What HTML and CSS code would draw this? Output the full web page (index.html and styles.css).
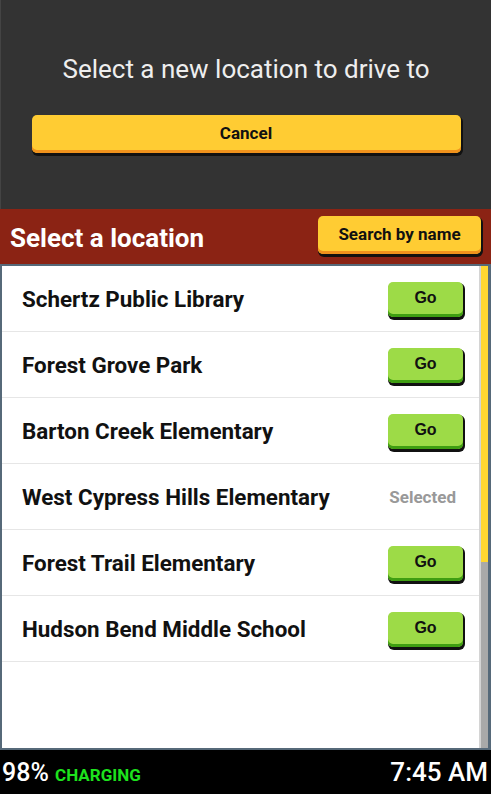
FILE: index.html
```html
<!DOCTYPE html>
<html lang="en">
<head>
  <meta charset="UTF-8" />
  <meta name="viewport" content="width=device-width, initial-scale=1.0" />
  <title>Select location</title>
  <link rel="stylesheet" href="styles.css">
</head>
<body>

  <!-- Prompt -->
  <section class="prompt">
    <h1>Select a new location to drive to</h1>
    <button class="btn btn-yellow cancel-btn">Cancel</button>
  </section>

  <!-- Header -->
  <header class="list-header">
    <h2>Select a location</h2>
    <button class="btn btn-yellow search-btn">Search by name</button>
  </header>

  <!-- Location list -->
  <div class="list-box">
    <ul class="locations">
      <li><span>Schertz Public Library</span><button class="btn btn-green">Go</button></li>
      <li><span>Forest Grove Park</span><button class="btn btn-green">Go</button></li>
      <li><span>Barton Creek Elementary</span><button class="btn btn-green">Go</button></li>
      <li><span>West Cypress Hills Elementary</span><em class="selected">Selected</em></li>
      <li><span>Forest Trail Elementary</span><button class="btn btn-green">Go</button></li>
      <li><span>Hudson Bend Middle School</span><button class="btn btn-green">Go</button></li>
    </ul>
    <div class="scrollbar">
      <div class="thumb"></div>
    </div>
  </div>

  <!-- Status bar -->
  <footer class="status">
    <div class="battery">98% <span class="charging">CHARGING</span></div>
    <div class="clock">7:45 AM</div>
  </footer>

</body>
</html>
```

FILE: styles.css
```css
body {
  margin: 0;
  height: 794px;
  display: flex;
  flex-direction: column;
  font-family: Roboto, "Liberation Sans", Arial, sans-serif;
  background: #000;
  overflow: hidden;
}

/* Buttons */
.btn {
  font-family: Roboto, "Liberation Sans", Arial, sans-serif;
  font-weight: bold;
  color: #111;
  border: none;
  border-radius: 5px;
  padding: 0;
  cursor: pointer;
}

.btn-yellow {
  background: #ffcc33;
  box-shadow: inset 0 -3px 0 #f0921c, 1px 2px 0 1px #111;
}

.btn-green {
  background: #9ddb47;
  box-shadow: inset 0 -3px 0 #3f9e12, 1px 2px 0 1px #111;
}

/* Prompt */
.prompt {
  height: 209px;
  box-sizing: border-box;
  background: #333;
  border-left: 1px solid #444;
  padding-top: 53px;
  display: flex;
  flex-direction: column;
  align-items: center;
}

.prompt h1 {
  margin: 0;
  font-size: 26px;
  font-weight: normal;
  color: #eee;
  line-height: 32px;
}

.cancel-btn {
  margin-top: 30px;
  width: 429px;
  height: 38px;
  font-size: 17px;
  padding-bottom: 2px;
}

/* Header */
.list-header {
  height: 55px;
  box-sizing: border-box;
  background: #8b2314;
  display: flex;
  align-items: center;
  justify-content: space-between;
  padding: 0 10px 0 10px;
}

.list-header h2 {
  margin: 0;
  font-size: 26px;
  color: #fff;
  font-weight: bold;
  padding-top: 2px;
}

.search-btn {
  width: 163px;
  height: 38px;
  font-size: 17px;
  margin-top: -3px;
  padding-bottom: 2px;
}

/* Location list */
.list-box {
  flex: 1;
  display: flex;
  background: #fff;
  border: 2px solid #566979;
  border-right-width: 3px;
}

.locations {
  flex: 1;
  list-style: none;
  margin: 0;
  padding: 0;
}

.locations li {
  height: 66px;
  box-sizing: border-box;
  border-bottom: 1px solid #e6e6e6;
  display: flex;
  align-items: center;
  justify-content: space-between;
  padding: 1px 16px 0 20px;
  font-size: 22.4px;
  font-weight: bold;
  color: #111;
}

.locations li .btn-green {
  width: 75px;
  height: 35px;
  font-size: 16px;
  font-family: "Liberation Sans", Arial, sans-serif;
  padding-bottom: 3px;
}

.selected {
  font-style: normal;
  font-size: 17px;
  color: #999;
  padding-right: 7px;
}

.scrollbar {
  width: 7px;
  background: #a9a9a9;
  border-left: 2px solid #d4d4d4;
}

.thumb {
  height: 296px;
  background: #ffd630;
}

/* Status bar */
.status {
  height: 44px;
  display: flex;
  align-items: center;
  justify-content: space-between;
  padding: 0 3px 0 2px;
  color: #fff;
}

.battery {
  font-size: 25px;
  font-weight: 500;
}

.charging {
  font-size: 17px;
  font-weight: bold;
  color: #1de21d;
}

.clock {
  font-size: 26px;
  font-weight: 500;
}
```
